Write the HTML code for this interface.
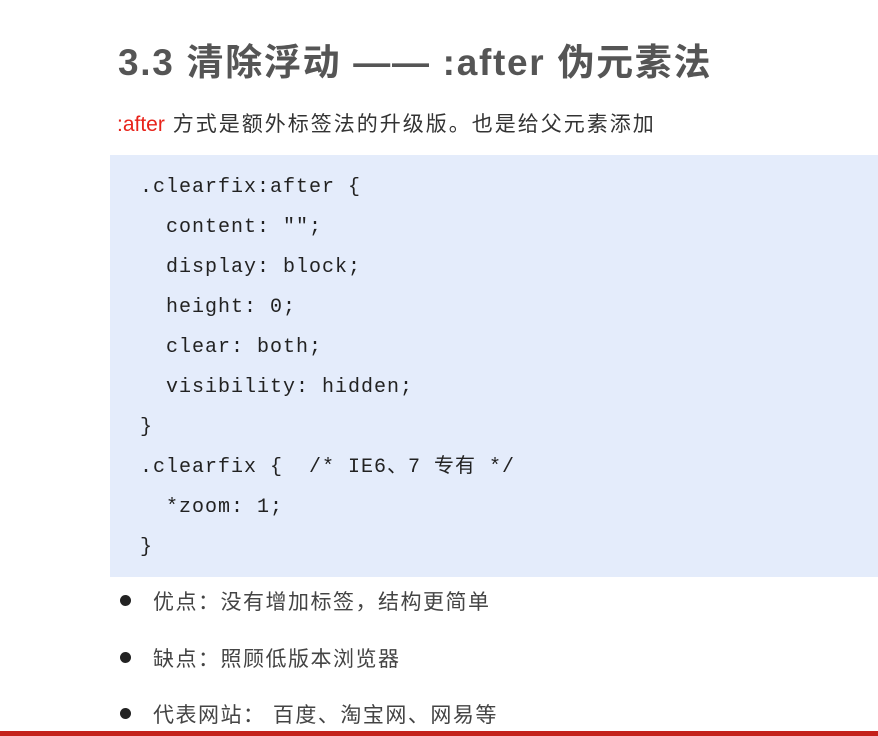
<!DOCTYPE html>
<html><head><meta charset="utf-8"><style>
body{margin:0;width:878px;height:736px;background:#fff;position:relative;overflow:hidden;font-family:"Liberation Sans","Noto Sans CJK SC",sans-serif;}
.t{position:absolute;left:118px;top:32px;font-size:37px;letter-spacing:1.7px;font-weight:bold;color:#555;white-space:nowrap;}
.s{position:absolute;left:117px;top:108px;font-size:21px;letter-spacing:2px;color:#333;white-space:nowrap;}
.s span{color:#e8231a;letter-spacing:0}
.code{position:absolute;left:110px;top:155px;width:768px;height:422px;background:#e4ecfb;}
.l{position:absolute;font-family:"Liberation Mono","Noto Sans CJK SC",monospace;font-size:20px;letter-spacing:1px;line-height:22px;color:#222;white-space:pre;}
.b{position:absolute;left:120px;font-size:21px;letter-spacing:1.5px;color:#444;white-space:nowrap;}
.b i{display:inline-block;width:11px;height:11px;border-radius:50%;background:#222;margin-right:22px;vertical-align:3px;}
.red{position:absolute;left:0;top:731px;width:878px;height:5px;background:#c4221b;}
</style></head><body>
<div class="t">3.3 清除浮动 —— :after 伪元素法</div>
<div class="s"><span>:after</span> 方式是额外标签法的升级版。也是给父元素添加</div>
<div class="code"></div>
<div class="l" style="left:140px;top:177px">.clearfix:after {</div>
<div class="l" style="left:140px;top:217px">  content: "";</div>
<div class="l" style="left:140px;top:257px">  display: block;</div>
<div class="l" style="left:140px;top:297px">  height: 0;</div>
<div class="l" style="left:140px;top:337px">  clear: both;</div>
<div class="l" style="left:140px;top:377px">  visibility: hidden;</div>
<div class="l" style="left:140px;top:417px">}</div>
<div class="l" style="left:140px;top:457px">.clearfix {  /* IE6、7 专有 */</div>
<div class="l" style="left:140px;top:497px">  *zoom: 1;</div>
<div class="l" style="left:140px;top:537px">}</div>
<div class="b" style="top:586px"><i></i>优点：没有增加标签，结构更简单</div>
<div class="b" style="top:643px"><i></i>缺点：照顾低版本浏览器</div>
<div class="b" style="top:699px"><i></i>代表网站： 百度、淘宝网、网易等</div>
<div class="red"></div>
</body></html>
